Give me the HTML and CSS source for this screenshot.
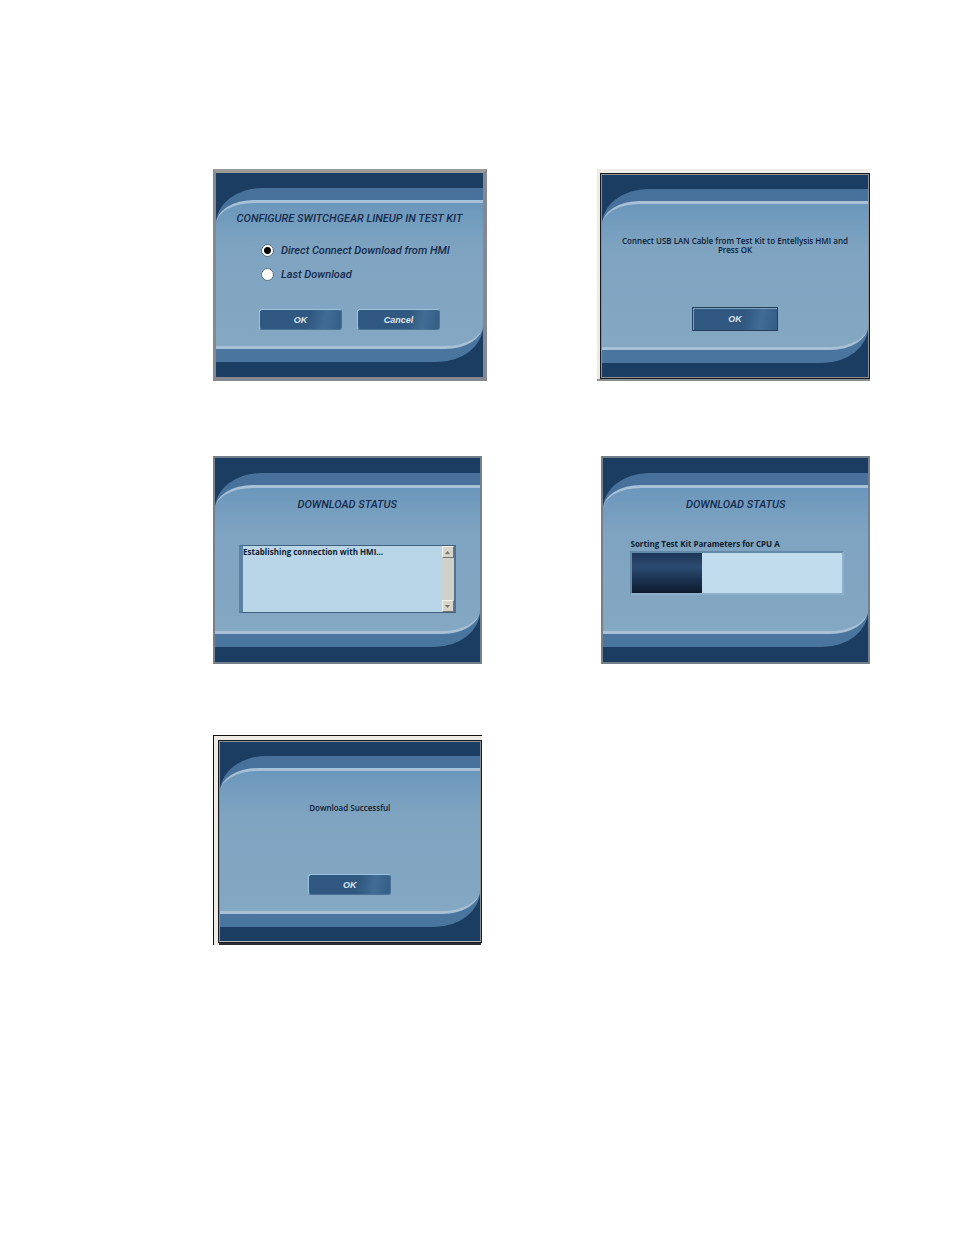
FILE: index.html
```html
<!DOCTYPE html>
<html lang="en">
<head>
<meta charset="utf-8">
<title>Test Kit Download</title>
<link rel="stylesheet" href="styles.css">
</head>
<body>
<main class="screens">
  <section class="dialog dialog-raised">
    <div class="band">
      <form class="panel panel-form">
        <h2 class="title">CONFIGURE SWITCHGEAR LINEUP IN TEST KIT</h2>
        <div class="options">
          <label class="option"><input class="radio" type="radio" name="source" checked>Direct Connect Download from HMI</label>
          <label class="option"><input class="radio" type="radio" name="source">Last Download</label>
        </div>
        <div class="actions">
          <button class="button" type="button">OK</button>
          <button class="button" type="button">Cancel</button>
        </div>
      </form>
    </div>
  </section>

  <section class="window">
    <div class="dialog dialog-window">
      <div class="band">
        <div class="panel panel-message">
          <p class="message">Connect USB LAN Cable from Test Kit to Entellysis HMI and Press OK</p>
          <div class="actions"><button class="button button-default" type="button">OK</button></div>
        </div>
      </div>
    </div>
  </section>

  <section class="dialog dialog-thin">
    <div class="band">
      <div class="panel panel-status">
        <h2 class="title">DOWNLOAD STATUS</h2>
        <div class="log">
          <p class="log-text">Establishing connection with HMI...</p>
          <div class="scrollbar">
            <button class="scroll-button" type="button" aria-label="Scroll up"><svg class="arrow" viewBox="0 0 5 3"><path d="M0 3 2.500 0 5 3z"/></svg></button>
            <button class="scroll-button" type="button" aria-label="Scroll down"><svg class="arrow" viewBox="0 0 5 3"><path d="M0 0 2.500 3 5 0z"/></svg></button>
          </div>
        </div>
      </div>
    </div>
  </section>

  <section class="dialog dialog-thin dialog-right">
    <div class="band">
      <div class="panel panel-status">
        <h2 class="title">DOWNLOAD STATUS</h2>
        <div class="task">
          <p class="task-name" id="task">Sorting Test Kit Parameters for CPU A</p>
          <div class="progress" role="progressbar" aria-labelledby="task" aria-valuenow="33"><div class="progress-fill" style="width:33%"></div></div>
        </div>
      </div>
    </div>
  </section>

  <section class="window window-framed">
    <div class="dialog dialog-window dialog-done">
      <div class="band">
        <div class="panel panel-message panel-done">
          <p class="message">Download Successful</p>
          <div class="actions"><button class="button" type="button">OK</button></div>
        </div>
      </div>
    </div>
  </section>
</main>
</body>
</html>
```
FILE: styles.css
```css
* { box-sizing: border-box; }
body { margin: 0; background: #fff; font-family: Roboto, "Liberation Sans", sans-serif; }
h2, p { margin: 0; }

.screens {
  display: grid;
  grid-template-columns: minmax(0, 1fr) minmax(0, 1fr);
  column-gap: 109px;
  align-items: start;
  padding: 169px 84px 288px 213px;
}

.dialog { background: #1b3d61; }
.dialog-raised {
  padding: 15px 0;
  border: 4px solid #85888f;
  border-left: 3px solid #85888f;
  border-top-color: #9a9a97;
}
.window {
  margin-left: 1px;
  padding: 4px 0 0 3px;
  border-bottom: 2px solid #8c8f91;
  background: #eeeae4;
}
.window-framed {
  width: 98%;
  margin: 71px 0 0;
  padding: 4px 0 0 4px;
  border: solid #111;
  border-width: 1px 0 0 1px;
}
.dialog-window {
  margin: 1px;
  padding: 14px 0;
  border: 1px solid #8c8f91;
  outline: 1px solid #161b22;
}
.dialog-done {
  margin-bottom: 3px;
  border-bottom-color: #b5bbc0;
  box-shadow: 0 3px 0 #2c3036;
}
.dialog-thin {
  width: 98%;
  margin-top: 75px;
  padding: 15px 0;
  border: 2px solid #76808c;
}
.dialog-right { justify-self: end; }

.band {
  padding: 12px 0 13px;
  background: linear-gradient(#47719a, #4a759e);
  border-radius: 46px 0 46px 0 / 36px 0 36px 0;
}
.panel {
  display: flex;
  flex-direction: column;
  align-items: center;
  min-height: 149px;
  border: solid #a9c1d6;
  border-width: 3px 0;
  border-radius: 38px 0 38px 0 / 24px 0 24px 0;
  background: linear-gradient(#6b97bc, #7fa4c1 32%, #84a7c2);
}
.panel-form { padding: 8px 12px 16px; }
.panel-message { padding: 32px 12px 16px; }
.panel-done { min-height: 146px; }
.panel-status { padding: 9px 24px 12px; }

.title, .option {
  color: #142b4d;
  font-size: 11px;
  font-style: italic;
  font-weight: 500;
  white-space: nowrap;
}
.title { line-height: 16px; }
.options { align-self: stretch; padding: 11px 0 0 33px; }
.option {
  display: flex;
  align-items: center;
  gap: 7px;
  height: 24px;
}
.radio {
  appearance: none;
  width: 13px;
  height: 13px;
  margin: 0;
  border: 1px solid #5c6f80;
  border-radius: 50%;
  background: #fff;
}
.radio:checked { background: radial-gradient(circle, #000 3px, #fff 4px); }

.actions { display: flex; gap: 15px; margin-top: auto; }
.button {
  width: 83px;
  height: 21px;
  padding: 0;
  border: 1px solid;
  border-color: #9bc3dc #4a7295 #4a7295 #9bc3dc;
  border-radius: 3px;
  background: linear-gradient(100deg, #305880 60%, #416c93 80%, #345d84);
  color: #dde5ed;
  font-family: "Liberation Sans", sans-serif;
  font-size: 9px;
  font-style: italic;
  font-weight: bold;
}
.button-default {
  width: 86px;
  height: 24px;
  border-radius: 0;
  outline: 1px solid #233f5c;
  outline-offset: -1px;
  box-shadow: inset 1px 1px 0 #7ba3c0;
}

.message, .log-text, .task-name {
  color: #0e1c30;
  font-family: "Open Sans", sans-serif;
  font-size: 8px;
  font-weight: 600;
}
.message { line-height: 9px; text-align: center; }

.log {
  display: flex;
  justify-content: space-between;
  align-self: stretch;
  height: 68px;
  margin-top: 32px;
  border: 1px solid #3f617f;
  border-left: 4px solid #5b81a3;
  border-right: 2px solid #4d7293;
  background: #b9d6e8;
}
.log-text, .task-name { line-height: 12px; }
.log-text, .task-name { font-weight: bold; }
.scrollbar {
  display: flex;
  flex-direction: column;
  justify-content: space-between;
  width: 12px;
  background: #d2d0cb;
}
.scroll-button {
  display: grid;
  place-items: center;
  height: 12px;
  padding: 0;
  border: 1px solid;
  border-color: #f5f2ea #77756f #77756f #f5f2ea;
  background: #d8d4cb;
}
.arrow { width: 5px; height: 3px; fill: #77736c; }

.task { align-self: stretch; padding: 25px 0 0 3px; }
.progress {
  height: 44px;
  margin-top: 1px;
  border: 2px solid;
  border-color: #6489a8 #8fb0c9 #8fb0c9 #6489a8;
  background: #c0dced;
}
.progress-fill { height: 100%; background: linear-gradient(#1c3658, #2d4b70 35%, #1b3453 65%, #0e1a2b); }
```
